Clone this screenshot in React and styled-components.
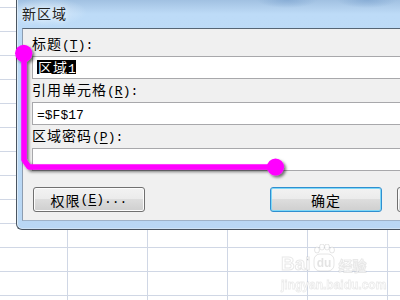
import React from "react";
import styled, { createGlobalStyle } from "styled-components";

const GlobalStyle = createGlobalStyle`
  html, body { margin: 0; padding: 0; }
  body { width: 400px; height: 300px; overflow: hidden; background: #fff; }
  * { box-sizing: border-box; }
`;

const Page = styled.div`
  position: relative;
  width: 400px;
  height: 300px;
  overflow: hidden;
  background-color: #fff;
  background-image: linear-gradient(to bottom, transparent 23px, #d0d7e5 23px),
    linear-gradient(to right, transparent 79px, #d0d7e5 79px);
  background-size: 100% 24px, 80px 100%;
  background-position: 0 8px, 68px 0;
  font-family: "Noto Sans CJK SC", sans-serif;
  font-size: 14px;
  letter-spacing: 1px;
  color: #000;
`;

const Window = styled.div`
  margin-left: 16px;
  width: 400px;
  height: 230px;
  display: flex;
  flex-direction: column;
  padding: 0 0 8px 5px;
  border-left: 1px solid #4a5561;
  border-bottom: 1px solid #4a5561;
  border-bottom-left-radius: 6px;
  background:
    radial-gradient(ellipse 30px 8px at 270px 0px, rgba(120, 160, 205, 0.6), transparent),
    radial-gradient(ellipse 30px 8px at 350px 0px, rgba(120, 160, 205, 0.6), transparent),
    radial-gradient(ellipse 40px 14px at 30px 12px, rgba(230, 242, 252, 0.7), transparent),
    linear-gradient(to bottom, #a1c1e2 0px, #b2d0ee 8px, #bddbf7 14px, #b9d7f4 100%);
  box-shadow: inset 1px 0 0 #dcebf8, inset 0 -1px 0 #cfe3f5;
`;

const TitleBar = styled.div`
  height: 28px;
  flex: none;
  padding-top: 4px;
  line-height: 18px;
  color: #222;
  text-shadow: 0 0 6px rgba(255, 255, 255, 0.9);
`;

const Client = styled.div`
  flex: 1;
  display: flex;
  flex-direction: column;
  background: #f0f0f0;
  border-top: 1px solid #566574;
  border-left: 1px solid #8d9db0;
  border-bottom: 1px solid #9fb2c7;
  padding: 5px 0 0 9px;
`;

const Fields = styled.div`
  display: flex;
  flex-direction: column;
  gap: 1px;
`;

const Field = styled.div`
  display: flex;
  flex-direction: column;
`;

const Label = styled.div`
  height: 18px;
  line-height: 18px;
  margin-bottom: 4px;
  white-space: nowrap;
`;

const TextBox = styled.div`
  height: 23px;
  border: 1px solid #a8a8ab;
  border-right: none;
  background: #fff;
  padding: 3px 0 0 4px;
  line-height: 14px;
  white-space: nowrap;
`;

const Selected = styled.span`
  display: inline-block;
  height: 14px;
  line-height: 14px;
  background: #000;
  color: #fff;
  padding-left: 1px;
`;

const Mono = styled.span`
  font-family: "Liberation Mono", monospace;
  font-size: 13px;
  letter-spacing: 0;
  u {
    text-decoration: underline;
    text-underline-offset: 2px;
  }
`;

const ButtonRow = styled.div`
  display: flex;
  margin-top: 16px;
  padding-left: 1px;
`;

const Button = styled.div`
  flex: none;
  width: 112px;
  height: 25px;
  display: flex;
  align-items: center;
  justify-content: center;
  margin-left: ${(p) => p.$offset || 0}px;
  border: 1px solid ${(p) => (p.$default ? "#2f8fd0" : "#707070")};
  border-radius: 3px;
  background: linear-gradient(to bottom, #f2f2f2 0%, #ebebeb 50%, #dddddd 50%, #cfcfcf 100%);
  box-shadow: inset 0 0 0 1px ${(p) => (p.$default ? "#7fd8f7" : "#fcfcfc")};
  white-space: nowrap;
  line-height: 16px;
`;

const Overlay = styled.svg`
  position: absolute;
  left: 0;
  top: 0;
  pointer-events: none;
`;

const Watermark = styled.div`
  position: absolute;
  left: 281px;
  top: 246px;
  width: 100px;
  opacity: 0.85;
  letter-spacing: 0;
`;

const MarkTop = styled.div`
  display: flex;
  align-items: flex-end;
  height: 28px;
`;

const MarkWord = styled.span`
  font-family: "Liberation Sans", sans-serif;
  font-weight: bold;
  font-size: 19px;
  line-height: 20px;
  color: #fff;
  -webkit-text-stroke: 1px rgba(120, 120, 120, 0.2);
`;

const MarkCjk = styled.span`
  font-family: "Noto Sans CJK SC", sans-serif;
  font-weight: bold;
  font-size: 14px;
  line-height: 18px;
  color: #fff;
  -webkit-text-stroke: 1px rgba(120, 120, 120, 0.2);
  margin-left: 2px;
`;

const MarkUrl = styled.div`
  font-family: "Liberation Sans", sans-serif;
  font-weight: bold;
  font-size: 12px;
  line-height: 14px;
  margin-top: 4px;
  color: #fff;
  -webkit-text-stroke: 0.8px rgba(120, 120, 120, 0.18);
`;

const Paw = styled.svg`
  flex: none;
  margin: 0 1px 2px 1px;
`;

export default function App() {
  return (
    <>
      <GlobalStyle />
      <Page>
        <Window>
          <TitleBar>新区域</TitleBar>
          <Client>
            <Fields>
              <Field>
                <Label>
                  标题<Mono>(<u>T</u>):</Mono>
                </Label>
                <TextBox>
                  <Selected>
                    区域<Mono>1</Mono>
                  </Selected>
                </TextBox>
              </Field>
              <Field>
                <Label>
                  引用单元格<Mono>(<u>R</u>):</Mono>
                </Label>
                <TextBox>
                  <Mono>=$F$17</Mono>
                </TextBox>
              </Field>
              <Field>
                <Label>
                  区域密码<Mono>(<u>P</u>):</Mono>
                </Label>
                <TextBox />
              </Field>
            </Fields>
            <ButtonRow>
              <Button>
                权限<Mono>(<u>E</u>)...</Mono>
              </Button>
              <Button $default $offset={125}>确定</Button>
              <Button $offset={15} aria-label="取消" />
            </ButtonRow>
          </Client>
        </Window>

        <Watermark>
          <MarkTop>
            <MarkWord>Bai</MarkWord>
            <Paw width="24" height="28" viewBox="0 0 24 28">
              <g fill="#fff" stroke="rgba(120,120,120,0.22)" strokeWidth="1">
                <ellipse cx="5" cy="6" rx="2.5" ry="3" />
                <ellipse cx="10" cy="3" rx="2.5" ry="3" />
                <ellipse cx="15" cy="3" rx="2.5" ry="3" />
                <ellipse cx="20" cy="6" rx="2.5" ry="3" />
                <rect x="2" y="10" width="20" height="17" rx="6" />
              </g>
              <text x="12" y="23" textAnchor="middle" fontFamily="Liberation Sans" fontWeight="bold" fontSize="12" fill="rgba(150,150,150,0.3)">du</text>
            </Paw>
            <MarkCjk>经验</MarkCjk>
          </MarkTop>
          <MarkUrl>jingyan.baidu.com</MarkUrl>
        </Watermark>

        <Overlay width="400" height="300" viewBox="0 0 400 300">
          <defs>
            <filter id="sh" x="-20%" y="-20%" width="140%" height="140%">
              <feDropShadow dx="2" dy="2" stdDeviation="1.6" floodColor="#000" floodOpacity="0.55" />
            </filter>
          </defs>
          <g filter="url(#sh)" fill="#ff00ff" stroke="#ff00ff">
            <polyline
              points="24,53 24,160 29,167 275,167"
              fill="none"
              strokeWidth="5.5"
              strokeLinejoin="round"
            />
            <circle cx="23.7" cy="53.3" r="8.6" stroke="none" />
            <circle cx="275.5" cy="167" r="8.6" stroke="none" />
          </g>
        </Overlay>
      </Page>
    </>
  );
}
